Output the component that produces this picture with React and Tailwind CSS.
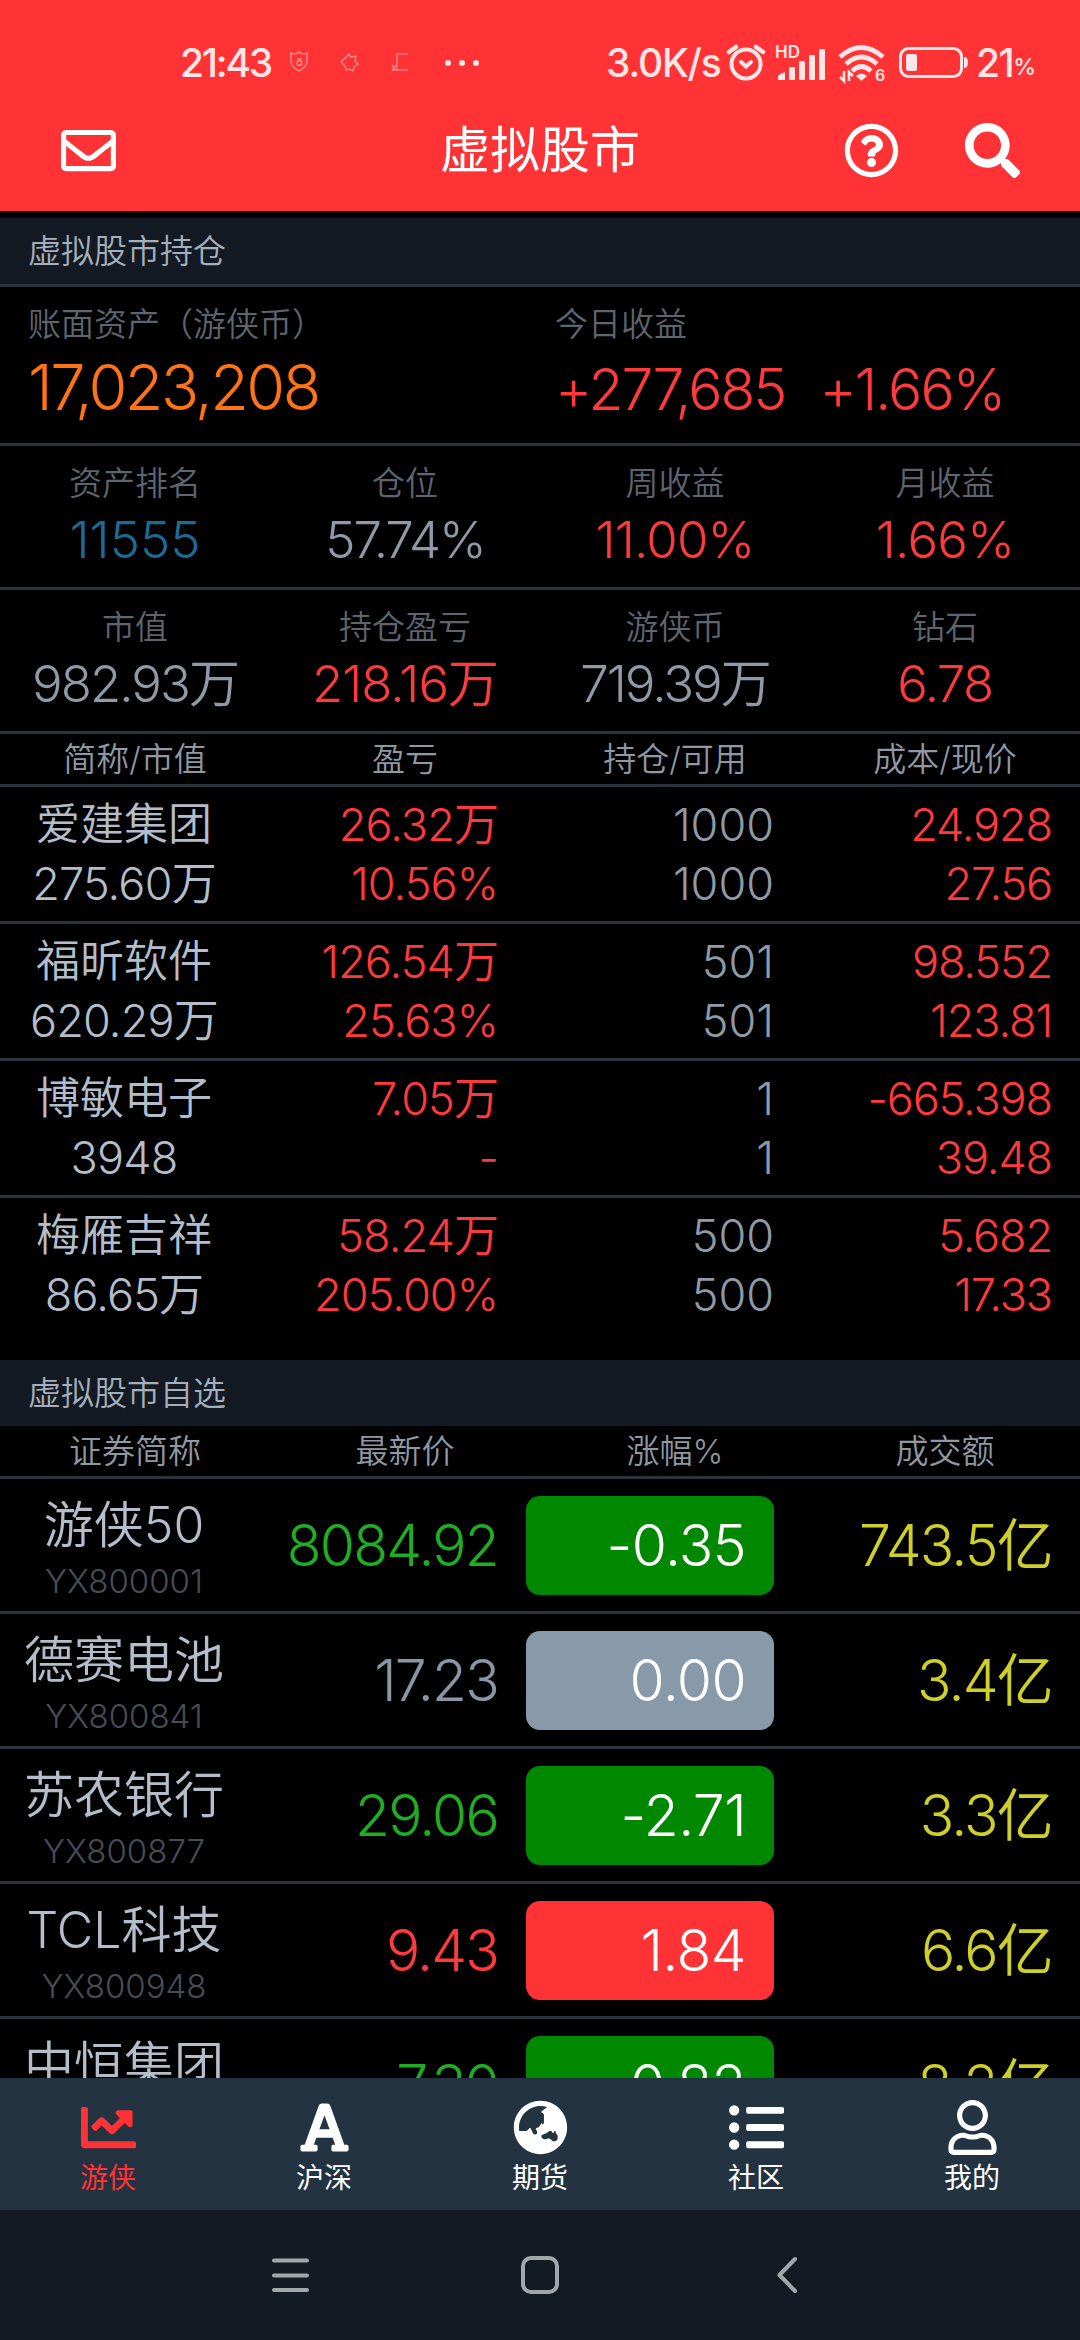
import {
  FaRegEnvelope,
  FaRegQuestionCircle,
  FaSearch,
  FaChartLine,
  FaFont,
  FaGlobeAsia,
  FaListUl,
  FaRegUser,
} from "react-icons/fa";

const stats = [
  [
    { label: "资产排名", value: "11555", color: "text-[#1a6b97]" },
    { label: "仓位", value: "57.74%", color: "text-[#8f9aa8] tracking-[-2px]" },
    { label: "周收益", value: "11.00%", color: "text-[#ff3a3c] tracking-[-0.8px]" },
    { label: "月收益", value: "1.66%", color: "text-[#ff3a3c] tracking-[-0.8px]" },
  ],
  [
    { label: "市值", value: "982.93万", color: "text-[#8f9aa8] tracking-[-2px]" },
    { label: "持仓盈亏", value: "218.16万", color: "text-[#ff3a3c] tracking-[-1px]" },
    { label: "游侠币", value: "719.39万", color: "text-[#8f9aa8] tracking-[-2px]" },
    { label: "钻石", value: "6.78", color: "text-[#ff3a3c] tracking-[-1.5px]" },
  ],
];

const holdings = [
  ["爱建集团", "275.60万", "26.32万", "10.56%", "1000", "1000", "24.928", "27.56"],
  ["福昕软件", "620.29万", "126.54万", "25.63%", "501", "501", "98.552", "123.81"],
  ["博敏电子", "3948", "7.05万", "-", "1", "1", "-665.398", "39.48"],
  ["梅雁吉祥", "86.65万", "58.24万", "205.00%", "500", "500", "5.682", "17.33"],
];

const watchlist = [
  { name: "游侠50", code: "YX800001", price: "8084.92", change: "-0.35", amount: "743.5亿", color: "text-[#1fae23]", bg: "bg-[#008800]" },
  { name: "德赛电池", code: "YX800841", price: "17.23", change: "0.00", amount: "3.4亿", color: "text-[#8896a6]", bg: "bg-[#8899aa]" },
  { name: "苏农银行", code: "YX800877", price: "29.06", change: "-2.71", amount: "3.3亿", color: "text-[#1fae23]", bg: "bg-[#008800]" },
  { name: "TCL科技", code: "YX800948", price: "9.43", change: "1.84", amount: "6.6亿", color: "text-[#ff3a3c]", bg: "bg-[#ff3336]" },
  { name: "中恒集团", code: "YX800252", price: "7.30", change: "-0.82", amount: "8.2亿", color: "text-[#1fae23]", bg: "bg-[#008800]" },
];

const tabs = [
  { label: "游侠", icon: FaChartLine, active: true },
  { label: "沪深", icon: FaFont },
  { label: "期货", icon: FaGlobeAsia },
  { label: "社区", icon: FaListUl },
  { label: "我的", icon: FaRegUser },
];

const StatusBar = () => (
  <div className="flex h-[85px] items-center pt-[40px] pl-[180px] text-[39px] leading-none font-medium text-[#ffe6e6]">
    <span className="w-[92px] tracking-[-2.2px]">21:43</span>
    <svg className="ml-[16px] shrink-0" width="120" height="24" viewBox="0 0 120 24" fill="none" stroke="#ff9c9c" strokeWidth="1.2">
      <path d="M3 2q5 2 8-1q3 3 8 1v8q0 6-8 10q-8-4-8-10z" />
      <path d="M9 12a2.300 2.300 0 1 0 4.600 0a2.300 2.300 0 1 0-4.600 0M9 8h5M13.600 10v5" />
      <path d="M53 11l8-8l2 3l5-1l-1 5l3 3l-4 3l-1 4l-4-2l-3 1l-1-4z" />
      <path d="M120 3h-11v16M105 19h15M104 14l3 5M108 14l-4 6" />
    </svg>
    <div className="ml-[37px] flex gap-[8px]">
      <i className="size-[6px] rounded-full bg-[#ffe6e6]" />
      <i className="size-[6px] rounded-full bg-[#ffe6e6]" />
      <i className="size-[6px] rounded-full bg-[#ffe6e6]" />
    </div>
    <span className="ml-[127px] w-[120px] tracking-[-1.2px] whitespace-nowrap">3.0K/s</span>
    {/* Alarm */}
    <svg className="shrink-0" width="40" height="38" viewBox="0 0 40 38" fill="none" stroke="#ffe6e6" strokeWidth="4" strokeLinecap="round">
      <circle cx="20" cy="20" r="14.5" />
      <path d="M15 18l5 4.500l5-4.500" />
      <path d="M3 8l7-5M37 8l-7-5" strokeWidth="4.500" />
    </svg>
    {/* Signal */}
    <svg className="ml-[9px] shrink-0 overflow-visible" width="51" height="38" viewBox="0 0 51 38" fill="#ffe6e6">
      <text x="0" y="14" fontSize="17" fontWeight="600">HD</text>
      <path d="M3 36v-4q3-3 7-4v8z" />
      <rect x="14" y="23" width="6" height="13" rx="1" />
      <rect x="24" y="17" width="6" height="19" rx="1" />
      <rect x="34" y="11" width="6" height="25" rx="1" />
      <rect x="44" y="5" width="6" height="31" rx="1" />
    </svg>
    {/* Wifi */}
    <svg className="ml-[12px] shrink-0 overflow-visible" width="48" height="38" viewBox="0 0 48 38" fill="none" stroke="#ffe6e6" strokeWidth="4.800">
      <path d="M2 13q21-19 43 0M8 20q15.500-14 31 0M14 27q9.500-9 19 0" />
      <path d="M18 32q5.500-5 11 0l-5.500 5z" fill="#ffe6e6" stroke="none" />
      <path d="M6 27v10l-4-4M11 37v-9l4 4" strokeWidth="2.500" />
      <text x="37" y="37" fontSize="16" fontWeight="600" fill="#ffe6e6" stroke="none">6</text>
    </svg>
    {/* Battery */}
    <svg className="ml-[13px] shrink-0" width="70" height="32" viewBox="0 0 70 32" fill="#ffe6e6">
      <rect x="1.500" y="1.500" width="61" height="28" rx="8" fill="none" stroke="#ffe6e6" strokeWidth="3" />
      <rect x="7" y="7" width="11" height="17" rx="2" />
      <path d="M65 10q4 0 4 5.500q0 5.500-4 5.500z" />
    </svg>
    <span className="ml-[7px] tracking-[-1.5px]">21</span>
    <span className="pt-[9px] text-[23px]">%</span>
  </div>
);

const SectionTitle = ({ children }) => (
  <div className="flex h-[66px] shrink-0 items-center bg-[#141a24] pl-[28px] text-[33px] leading-none text-[#a5afbb]">
    {children}
  </div>
);

const TableHead = ({ labels }) => (
  <div className="grid h-[53px] shrink-0 grid-cols-4 items-center border-b-[3px] border-[#2a323a] text-center text-[33px] leading-none text-[#8f98a3]">
    {labels.map((label) => (
      <span key={label}>{label}</span>
    ))}
  </div>
);

const Stat = ({ label, value, color }) => (
  <div className="flex flex-col items-center pt-[18px]">
    <span className="text-[33px] leading-[38px] text-[#5d656f]">{label}</span>
    <span className={`text-[51px] leading-[76px] ${color}`}>{value}</span>
  </div>
);

const HoldingRow = ({ row, last }) => (
  <div
    className={`grid shrink-0 grid-cols-[248px_250px_276px_278px] pt-[8px] text-right text-[45px] leading-[59px] text-[#ff3a3c] ${
      last ? "h-[162px]" : "h-[137px] border-b-[3px] border-[#2a323a]"
    }`}
  >
    <div className="flex flex-col text-center text-[#b4becb]">
      <span className="text-[44px]">{row[0]}</span>
      <span className="tracking-[-0.8px]">{row[1]}</span>
    </div>
    <div className="flex flex-col tracking-[-0.9px]">
      <span>{row[2]}</span>
      <span>{row[3]}</span>
    </div>
    <div className="flex flex-col text-[#8f9aa8]">
      <span>{row[4]}</span>
      <span>{row[5]}</span>
    </div>
    <div className="flex flex-col tracking-[-1.1px]">
      <span>{row[6]}</span>
      <span>{row[7]}</span>
    </div>
  </div>
);

const WatchRow = ({ item }) => (
  <div className="grid h-[135px] shrink-0 grid-cols-[248px_250px_276px_278px] items-center border-b-[3px] border-[#2a323a] text-right text-[57px] leading-none">
    <div className="flex flex-col items-center pt-[10px]">
      <span className="text-[50px] leading-[62px] text-[#b4becb]">{item.name}</span>
      <span className="text-[33px] leading-[50px] text-[#474d55]">{item.code}</span>
    </div>
    <span className={`tracking-[-1.8px] ${item.color}`}>{item.price}</span>
    <div className={`ml-[28px] flex h-[99px] items-center justify-end rounded-[14px] pr-[28px] tracking-[-0.6px] text-white ${item.bg}`}>
      {item.change}
    </div>
    <span className="tracking-[-1.8px] text-[#cfcf2a]">{item.amount}</span>
  </div>
);

const App = () => {
  return (
    <div className="flex h-[2340px] w-[1080px] flex-col overflow-hidden bg-black font-['Inter','Noto_Sans_CJK_SC',sans-serif] font-[350]">
      {/* Header */}
      <header className="h-[211px] shrink-0 bg-[#ff3336] text-white">
        <StatusBar />
        <div className="grid h-[126px] grid-cols-3 items-center pt-[4px]">
          <FaRegEnvelope className="ml-[61px] size-[55px]" />
          <h1 className="text-center text-[50px] leading-none font-normal">虚拟股市</h1>
          <div className="flex justify-end gap-[66px] pr-[60px]">
            <FaRegQuestionCircle className="size-[55px]" />
            <FaSearch className="size-[55px]" />
          </div>
        </div>
      </header>

      <main className="flex h-[1867px] shrink-0 flex-col overflow-hidden pt-[7px]">
        <SectionTitle>虚拟股市持仓</SectionTitle>

        {/* Assets */}
        <div className="flex h-[162px] shrink-0 border-y-[3px] border-[#2a323a] pt-[17px]">
          <div className="flex w-[555px] flex-col pl-[28px]">
            <span className="text-[33px] leading-[40px] text-[#5d656f]">账面资产（游侠币）</span>
            <span className="text-[63px] leading-[86px] tracking-[-2.600px] text-[#ff7314]">17,023,208</span>
          </div>
          <div className="flex flex-col">
            <span className="text-[33px] leading-[40px] text-[#5d656f]">今日收益</span>
            <div className="flex gap-[34px] text-[57px] leading-[92px] tracking-[-1.900px] text-[#ff3a3c]">
              <span>+277,685</span>
              <span>+1.66%</span>
            </div>
          </div>
        </div>
        {stats.map((row, i) => (
          <div key={i} className="grid h-[144px] shrink-0 grid-cols-4 border-b-[3px] border-[#2a323a]">
            {row.map((s) => (
              <Stat key={s.label} {...s} />
            ))}
          </div>
        ))}

        {/* Holdings */}
        <TableHead labels={["简称/市值", "盈亏", "持仓/可用", "成本/现价"]} />
        {holdings.map((row, i) => (
          <HoldingRow key={row[0]} row={row} last={i === holdings.length - 1} />
        ))}

        {/* Watchlist */}
        <SectionTitle>虚拟股市自选</SectionTitle>
        <TableHead labels={["证券简称", "最新价", "涨幅%", "成交额"]} />
        {watchlist.map((item) => (
          <WatchRow key={item.code} item={item} />
        ))}
      </main>

      {/* Tabs */}
      <nav className="grid h-[132px] shrink-0 grid-cols-5 bg-[#233342] text-white">
        {tabs.map(({ label, icon: Icon, active }) => (
          <div key={label} className={`flex flex-col items-center pt-[22px] ${active ? "text-[#ff3336]" : ""}`}>
            <Icon className="size-[55px]" />
            <span className="text-[28px] leading-[47px] font-normal">{label}</span>
          </div>
        ))}
      </nav>

      {/* System buttons */}
      <footer className="flex h-[130px] shrink-0 items-center bg-[#141a24] pl-[272px]">
        <svg width="530" height="40" viewBox="0 0 530 40" fill="none" stroke="#a3a6ab" strokeWidth="4" strokeLinecap="round" strokeLinejoin="round">
          <path d="M2 5.500h33M2 20.500h33M2 35h33" />
          <rect x="251" y="3" width="34" height="34" rx="8" />
          <path d="M523 4l-15.500 16l15.500 16" />
        </svg>
      </footer>
    </div>
  );
};

export default App;
